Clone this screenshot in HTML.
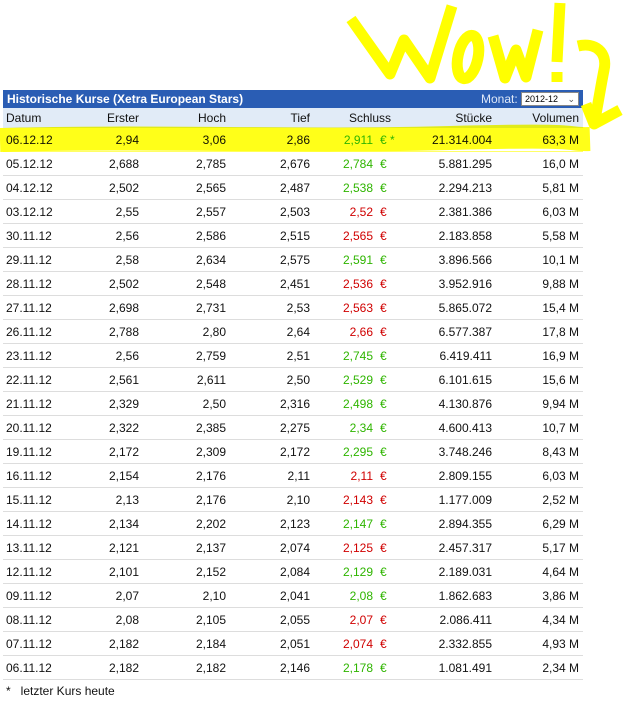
<!DOCTYPE html>
<html><head><meta charset="utf-8"><style>
*{margin:0;padding:0;box-sizing:border-box}
body{width:626px;height:703px;background:#fff;position:relative;overflow:hidden;font-family:"Liberation Sans",Arial,sans-serif;font-size:12px;color:#111}
.title{position:absolute;left:3px;top:90px;width:580px;height:18px;background:#2a5db4;color:#fff;font-weight:bold;font-size:12px;line-height:18px;padding-left:4px}
.mon{position:absolute;right:4px;top:0;font-weight:normal;color:#dfe8f8}
.sel{display:inline-block;width:58px;height:14px;background:#fff;border:1px solid #888;color:#000;font-size:9px;line-height:12px;padding-left:3px;vertical-align:middle;position:relative;top:-1px}
.hdr{position:absolute;left:3px;top:108px;width:580px;height:20px;background:#e1ebf7}
.row{position:absolute;left:3px;width:580px;height:24px;border-bottom:1px solid #ddd}
.c{position:absolute;line-height:24px;white-space:nowrap}
.hdr .c{line-height:20px}
.g{color:#2fb500}.r{color:#d00000}
</style></head><body>
<div class="title">Historische Kurse (Xetra European Stars)<span class="mon">Monat: <span class="sel">2012-12 <span style="position:absolute;right:3px;color:#555">&#8964;</span></span></span></div>
<div class="hdr">
<span class="c" style="left:3px">Datum</span>
<span class="c" style="right:444px">Erster</span>
<span class="c" style="right:357px">Hoch</span>
<span class="c" style="right:273px">Tief</span>
<span class="c" style="left:346px">Schluss</span>
<span class="c" style="right:91px">Stücke</span>
<span class="c" style="right:4px">Volumen</span>
</div>
<div id="rows"></div>
<div class="c" style="left:6px;top:679px">*&nbsp;&nbsp; letzter Kurs heute</div>
<svg style="position:absolute;left:0;top:0" width="626" height="703">
<path d="M0,140 C150,136 300,142 450,138 S560,140 590,139" stroke="#ffff00" stroke-width="24" fill="none" opacity="0.9" style="mix-blend-mode:multiply"/>
<g stroke="#ffff00" stroke-width="11" fill="none" stroke-linecap="butt" stroke-linejoin="round">
<path d="M351,19 L390,74 L404,40 L430,78 L452,6"/>
<ellipse cx="468" cy="57" rx="10" ry="22" transform="rotate(12 468 57)"/>
<path d="M493,36 L505,78 L516,50 L526,77 L538,30"/>
<path d="M560,3 L557,62"/>
<path d="M557,72 L557,82"/>
<path d="M578,46 C595,42 608,52 604,70 C600,90 598,105 594,124 M586,104 L594,124 L620,110"/>
</g>
</svg>
<script>
var d=[["06.12.12","2,94","3,06","2,86","2,911","g","21.314.004","63,3 M"],
["05.12.12","2,688","2,785","2,676","2,784","g","5.881.295","16,0 M"],
["04.12.12","2,502","2,565","2,487","2,538","g","2.294.213","5,81 M"],
["03.12.12","2,55","2,557","2,503","2,52","r","2.381.386","6,03 M"],
["30.11.12","2,56","2,586","2,515","2,565","r","2.183.858","5,58 M"],
["29.11.12","2,58","2,634","2,575","2,591","g","3.896.566","10,1 M"],
["28.11.12","2,502","2,548","2,451","2,536","r","3.952.916","9,88 M"],
["27.11.12","2,698","2,731","2,53","2,563","r","5.865.072","15,4 M"],
["26.11.12","2,788","2,80","2,64","2,66","r","6.577.387","17,8 M"],
["23.11.12","2,56","2,759","2,51","2,745","g","6.419.411","16,9 M"],
["22.11.12","2,561","2,611","2,50","2,529","g","6.101.615","15,6 M"],
["21.11.12","2,329","2,50","2,316","2,498","g","4.130.876","9,94 M"],
["20.11.12","2,322","2,385","2,275","2,34","g","4.600.413","10,7 M"],
["19.11.12","2,172","2,309","2,172","2,295","g","3.748.246","8,43 M"],
["16.11.12","2,154","2,176","2,11","2,11","r","2.809.155","6,03 M"],
["15.11.12","2,13","2,176","2,10","2,143","r","1.177.009","2,52 M"],
["14.11.12","2,134","2,202","2,123","2,147","g","2.894.355","6,29 M"],
["13.11.12","2,121","2,137","2,074","2,125","r","2.457.317","5,17 M"],
["12.11.12","2,101","2,152","2,084","2,129","g","2.189.031","4,64 M"],
["09.11.12","2,07","2,10","2,041","2,08","g","1.862.683","3,86 M"],
["08.11.12","2,08","2,105","2,055","2,07","r","2.086.411","4,34 M"],
["07.11.12","2,182","2,184","2,051","2,074","r","2.332.855","4,93 M"],
["06.11.12","2,182","2,182","2,146","2,178","g","1.081.491","2,34 M"]];
var h="";
d.forEach(function(r,i){var t=i==0?128:152+(i-1)*24;
h+='<div class="row" style="top:'+t+'px'+(i==0?';border-bottom-color:#ffff66':'')+'">'+
'<span class="c" style="left:3px">'+r[0]+'</span>'+
'<span class="c" style="right:444px">'+r[1]+'</span>'+
'<span class="c" style="right:357px">'+r[2]+'</span>'+
'<span class="c" style="right:273px">'+r[3]+'</span>'+
'<span class="c '+r[5]+'" style="right:210px">'+r[4]+'</span>'+
'<span class="c '+r[5]+'" style="left:377px">€'+(i==0?' *':'')+'</span>'+
'<span class="c" style="right:91px">'+r[6]+'</span>'+
'<span class="c" style="right:4px">'+r[7]+'</span></div>';});
document.getElementById("rows").innerHTML=h;
</script>
</body></html>
